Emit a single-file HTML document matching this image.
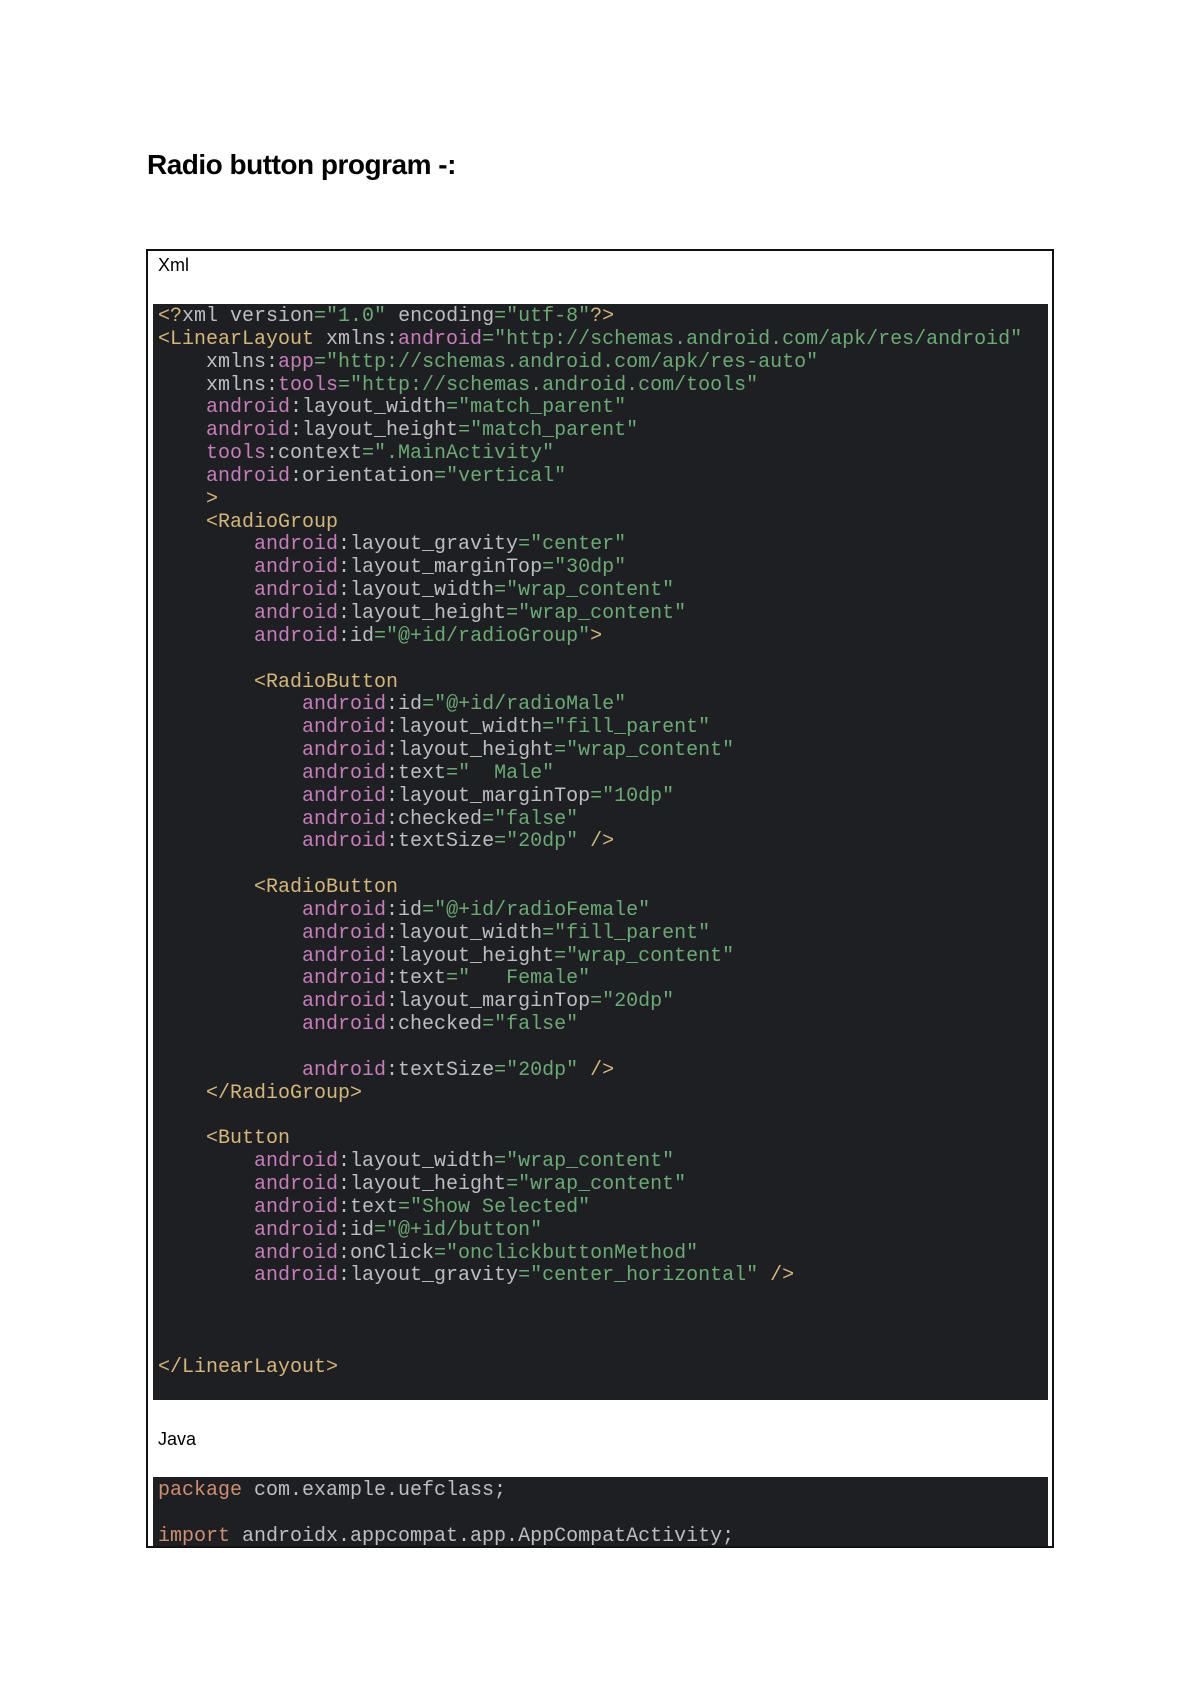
<!DOCTYPE html>
<html><head><meta charset="utf-8">
<style>
html,body{margin:0;padding:0;background:#fff;width:1200px;height:1696px;overflow:hidden;position:relative}
.t{position:absolute;left:147px;top:149px;font:bold 28px "Liberation Sans",sans-serif;color:#000;letter-spacing:-0.5px}
.box{position:absolute;left:146px;top:249px;width:908px;height:1299px;border:2px solid #111;box-sizing:border-box}
.lbl{position:absolute;font:18px "Liberation Sans",sans-serif;color:#000}
.code{position:absolute;left:153px;width:895px;background:#1e1f22;margin:0;box-sizing:border-box;padding:2px 0 0 5px;font:20px/22.85px "Liberation Mono",monospace;color:#bcbec4;white-space:pre;overflow:hidden}
.g{color:#d5b778}.p{color:#c77dbb}.s{color:#6aab73}.k{color:#cf8e6d}
</style></head><body>
<div class="t">Radio button program -:</div>
<div class="box"></div>
<div class="lbl" style="left:158px;top:255px">Xml</div>
<pre class="code" style="top:304px;height:1096px"><span class="g">&lt;?</span>xml version<span class="s">="1.0"</span> encoding<span class="s">="utf-8"</span><span class="g">?&gt;</span>
<span class="g">&lt;LinearLayout</span> xmlns:<span class="p">android</span><span class="s">="http://schemas.android.com/apk/res/android"</span>
    xmlns:<span class="p">app</span><span class="s">="http://schemas.android.com/apk/res-auto"</span>
    xmlns:<span class="p">tools</span><span class="s">="http://schemas.android.com/tools"</span>
    <span class="p">android</span>:layout_width<span class="s">="match_parent"</span>
    <span class="p">android</span>:layout_height<span class="s">="match_parent"</span>
    <span class="p">tools</span>:context<span class="s">=".MainActivity"</span>
    <span class="p">android</span>:orientation<span class="s">="vertical"</span>
    <span class="g">&gt;</span>
    <span class="g">&lt;RadioGroup</span>
        <span class="p">android</span>:layout_gravity<span class="s">="center"</span>
        <span class="p">android</span>:layout_marginTop<span class="s">="30dp"</span>
        <span class="p">android</span>:layout_width<span class="s">="wrap_content"</span>
        <span class="p">android</span>:layout_height<span class="s">="wrap_content"</span>
        <span class="p">android</span>:id<span class="s">="@+id/radioGroup"</span><span class="g">&gt;</span>

        <span class="g">&lt;RadioButton</span>
            <span class="p">android</span>:id<span class="s">="@+id/radioMale"</span>
            <span class="p">android</span>:layout_width<span class="s">="fill_parent"</span>
            <span class="p">android</span>:layout_height<span class="s">="wrap_content"</span>
            <span class="p">android</span>:text<span class="s">="  Male"</span>
            <span class="p">android</span>:layout_marginTop<span class="s">="10dp"</span>
            <span class="p">android</span>:checked<span class="s">="false"</span>
            <span class="p">android</span>:textSize<span class="s">="20dp"</span> <span class="g">/&gt;</span>

        <span class="g">&lt;RadioButton</span>
            <span class="p">android</span>:id<span class="s">="@+id/radioFemale"</span>
            <span class="p">android</span>:layout_width<span class="s">="fill_parent"</span>
            <span class="p">android</span>:layout_height<span class="s">="wrap_content"</span>
            <span class="p">android</span>:text<span class="s">="   Female"</span>
            <span class="p">android</span>:layout_marginTop<span class="s">="20dp"</span>
            <span class="p">android</span>:checked<span class="s">="false"</span>

            <span class="p">android</span>:textSize<span class="s">="20dp"</span> <span class="g">/&gt;</span>
    <span class="g">&lt;/RadioGroup&gt;</span>

    <span class="g">&lt;Button</span>
        <span class="p">android</span>:layout_width<span class="s">="wrap_content"</span>
        <span class="p">android</span>:layout_height<span class="s">="wrap_content"</span>
        <span class="p">android</span>:text<span class="s">="Show Selected"</span>
        <span class="p">android</span>:id<span class="s">="@+id/button"</span>
        <span class="p">android</span>:onClick<span class="s">="onclickbuttonMethod"</span>
        <span class="p">android</span>:layout_gravity<span class="s">="center_horizontal"</span> <span class="g">/&gt;</span>



<span class="g">&lt;/LinearLayout&gt;</span></pre>
<div class="lbl" style="left:158px;top:1429px">Java</div>
<pre class="code" style="top:1477px;height:69px;line-height:23px"><span class="k">package</span> com.example.uefclass;

<span class="k">import</span> androidx.appcompat.app.AppCompatActivity;</pre>
</body></html>
